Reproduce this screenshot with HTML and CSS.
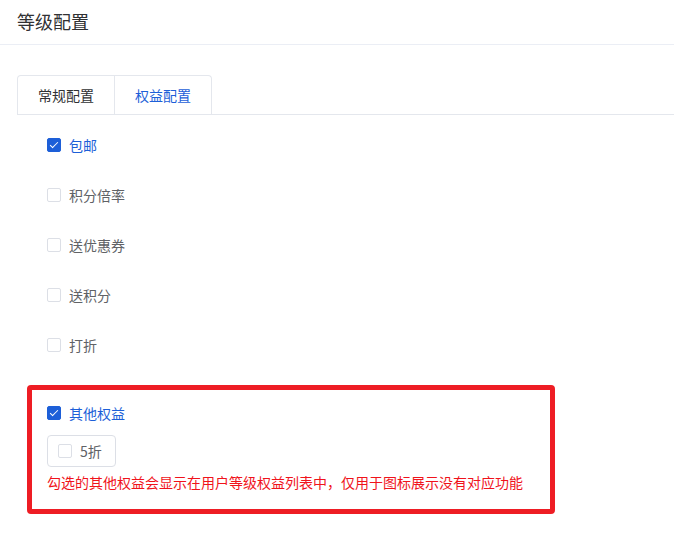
FILE: index.html
```html
<!DOCTYPE html>
<html lang="zh-CN">
<head>
    <meta charset="UTF-8">
    <meta name="viewport" content="width=device-width, initial-scale=1.0">
    <title>等级配置</title>
    <link rel="stylesheet" href="styles.css">
</head>
<body>
    <div class="page-header">等级配置</div>

    <div class="content">
        <div class="tabs">
            <div class="tab">常规配置</div>
            <div class="tab active">权益配置</div>
        </div>

        <div class="rights">
            <label class="check-row checked"><span class="box"></span>包邮</label>
            <label class="check-row"><span class="box"></span>积分倍率</label>
            <label class="check-row"><span class="box"></span>送优惠券</label>
            <label class="check-row"><span class="box"></span>送积分</label>
            <label class="check-row"><span class="box"></span>打折</label>

            <div class="other-rights">
                <label class="check-row checked"><span class="box"></span>其他权益</label>
                <label class="bordered-check"><span class="box"></span>5折</label>
                <p class="tip">勾选的其他权益会显示在用户等级权益列表中，仅用于图标展示没有对应功能</p>
            </div>
        </div>
    </div>
</body>
</html>
```

FILE: styles.css
```css
body {
    margin: 0;
    font-family: "Noto Sans CJK SC", "Liberation Sans", sans-serif;
    font-size: 14px;
    color: #606266;
    background: #fff;
}
.page-header {
    height: 44px;
    line-height: 42px;
    padding-left: 17px;
    font-size: 18px;
    color: #303133;
    border-bottom: 1px solid #ebeef5;
}
.content {
    padding: 30px 0 0 17px;
}
.tabs {
    display: flex;
    border-bottom: 1px solid #e4e7ed;
}
.tab {
    height: 38px;
    line-height: 38px;
    padding: 0 20px;
    color: #303133;
    border: 1px solid #e4e7ed;
    border-bottom: none;
}
.tab:first-child {
    border-radius: 4px 0 0 0;
}
.tab + .tab {
    border-left: none;
    border-radius: 0 4px 0 0;
}
.tab.active {
    color: #1d5fd8;
}
.rights {
    padding: 20px 0 0 30px;
}
.check-row {
    display: flex;
    align-items: center;
    height: 20px;
    margin-bottom: 30px;
    cursor: pointer;
}
.box {
    box-sizing: border-box;
    width: 14px;
    height: 14px;
    margin-right: 8px;
    border: 1px solid #dcdfe6;
    border-radius: 2px;
    background: #fff;
    position: relative;
}
.checked {
    color: #1d5fd8;
}
.checked .box {
    background: #1d5fd8;
    border-color: #1d5fd8;
}
.checked .box::after {
    content: "";
    position: absolute;
    left: 4px;
    top: 1px;
    width: 3px;
    height: 7px;
    border: 1px solid #fff;
    border-top: none;
    border-left: none;
    transform: rotate(45deg);
}
.other-rights {
    box-sizing: border-box;
    width: 528px;
    margin: 3px 0 0 -20px;
    padding: 13px 15px 17px;
    border: 5px solid #ee1d24;
    border-radius: 4px;
}
.other-rights .check-row {
    margin-bottom: 12px;
}
.bordered-check {
    box-sizing: border-box;
    display: inline-flex;
    align-items: center;
    height: 32px;
    padding: 0 13px 0 10px;
    border: 1px solid #dcdfe6;
    border-radius: 4px;
    cursor: pointer;
}
.tip {
    margin: 5px 0 0;
    line-height: 20px;
    color: #f0131b;
}
```
